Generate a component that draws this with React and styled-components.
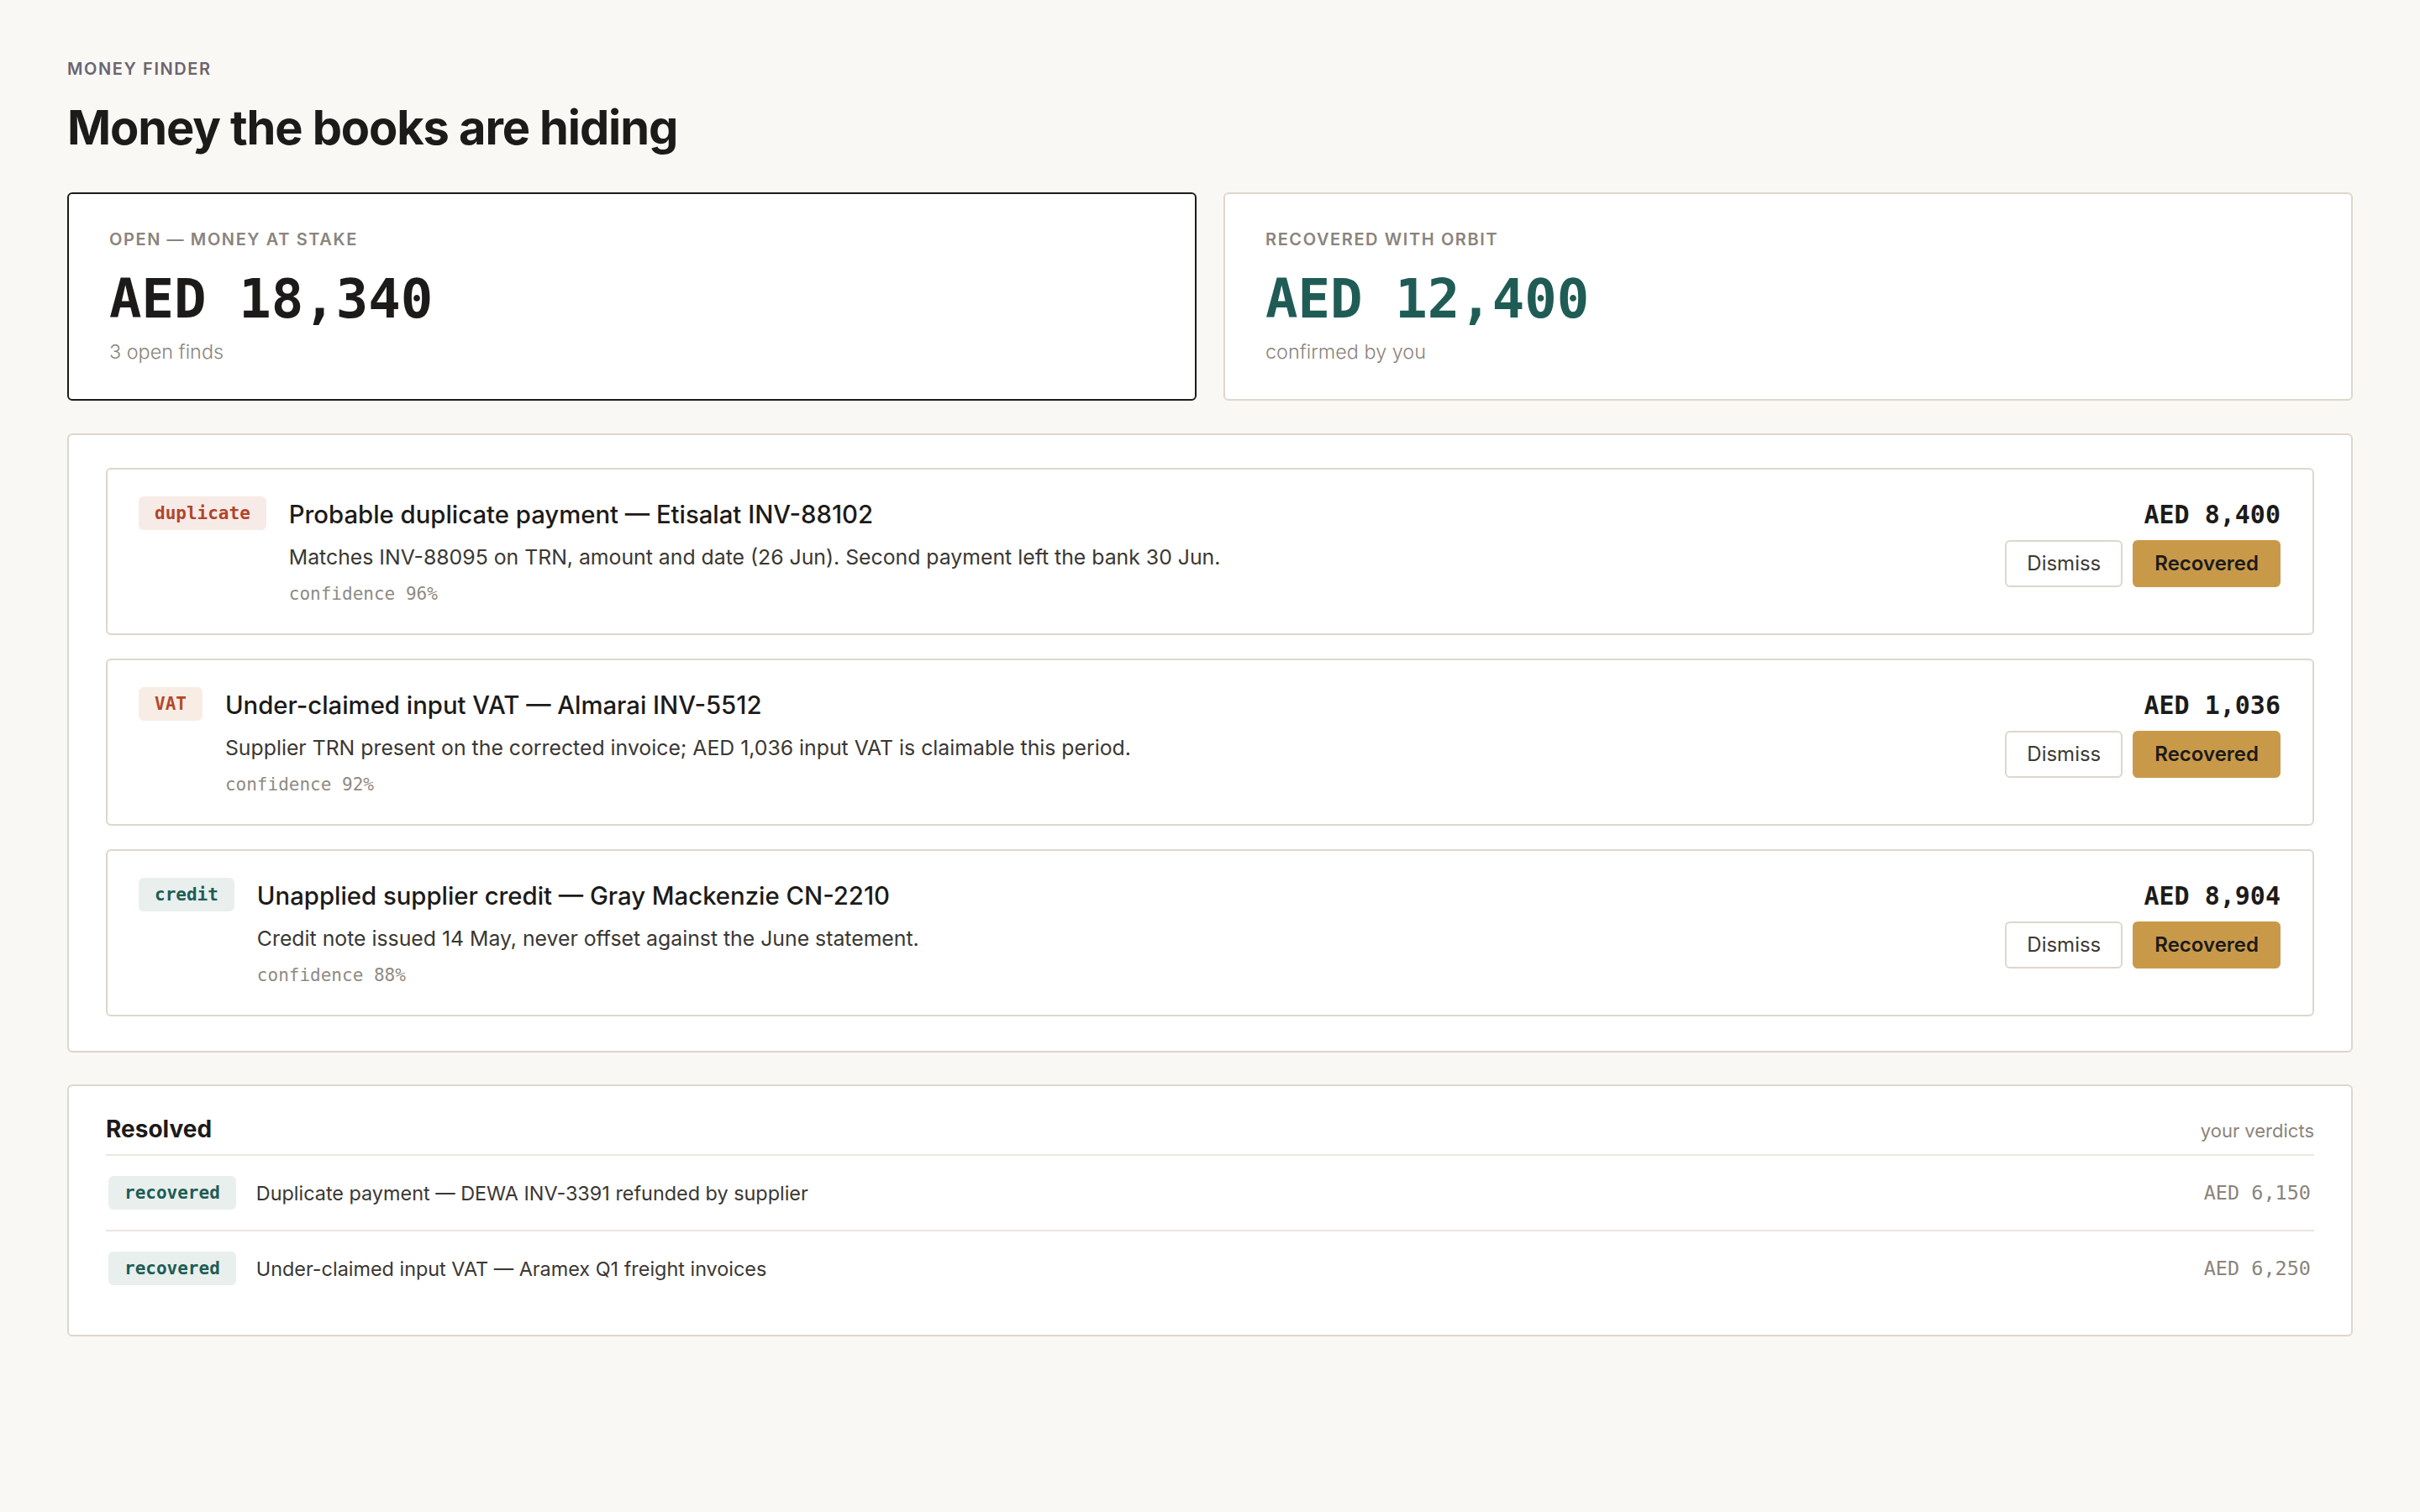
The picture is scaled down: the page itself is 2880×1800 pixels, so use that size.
import React from 'react';
import styled, { createGlobalStyle } from 'styled-components';

const GlobalStyle = createGlobalStyle`
  * {
    box-sizing: border-box;
  }
  body {
    margin: 0;
    background: #faf8f5;
    color: #1c1b19;
    font-family: Inter, 'Noto Sans', sans-serif;
  }
`;

const mono = `'DejaVu Sans Mono', 'Liberation Mono', monospace`;

const tagColors = {
  duplicate: { bg: '#f7ebe7', fg: '#b0452b' },
  vat: { bg: '#f8ede4', fg: '#b4472a' },
  credit: { bg: '#e8efed', fg: '#1f5c55' },
};

const findings = [
  {
    kind: 'duplicate',
    tag: 'duplicate',
    title: 'Probable duplicate payment — Etisalat INV-88102',
    text: 'Matches INV-88095 on TRN, amount and date (26 Jun). Second payment left the bank 30 Jun.',
    confidence: 96,
    amount: 'AED 8,400',
  },
  {
    kind: 'vat',
    tag: 'VAT',
    title: 'Under-claimed input VAT — Almarai INV-5512',
    text: 'Supplier TRN present on the corrected invoice; AED 1,036 input VAT is claimable this period.',
    confidence: 92,
    amount: 'AED 1,036',
  },
  {
    kind: 'credit',
    tag: 'credit',
    title: 'Unapplied supplier credit — Gray Mackenzie CN-2210',
    text: 'Credit note issued 14 May, never offset against the June statement.',
    confidence: 88,
    amount: 'AED 8,904',
  },
];

const resolved = [
  { label: 'Duplicate payment — DEWA INV-3391 refunded by supplier', amount: 'AED 6,150' },
  { label: 'Under-claimed input VAT — Aramex Q1 freight invoices', amount: 'AED 6,250' },
];

const App = () => {
  return (
    <Page>
      <GlobalStyle />
      <Eyebrow>Money finder</Eyebrow>
      <Heading>Money the books are hiding</Heading>

      <Stats>
        <StatCard active>
          <StatLabel>Open — money at stake</StatLabel>
          <StatValue>AED 18,340</StatValue>
          <StatNote>3 open finds</StatNote>
        </StatCard>
        <StatCard>
          <StatLabel>Recovered with Orbit</StatLabel>
          <StatValue tone='teal'>AED 12,400</StatValue>
          <StatNote>confirmed by you</StatNote>
        </StatCard>
      </Stats>

      <FindingsPanel>
        {findings.map((f) => (
          <FindingCard key={f.title}>
            <Tag kind={f.kind}>{f.tag}</Tag>
            <FindingBody>
              <FindingTitle>{f.title}</FindingTitle>
              <FindingText>{f.text}</FindingText>
              <Confidence>confidence {f.confidence}%</Confidence>
            </FindingBody>
            <FindingSide>
              <FindingAmount>{f.amount}</FindingAmount>
              <Actions>
                <Button>Dismiss</Button>
                <Button primary>Recovered</Button>
              </Actions>
            </FindingSide>
          </FindingCard>
        ))}
      </FindingsPanel>

      <ResolvedPanel>
        <ResolvedHeader>
          <ResolvedTitle>Resolved</ResolvedTitle>
          <ResolvedHint>your verdicts</ResolvedHint>
        </ResolvedHeader>
        {resolved.map((r) => (
          <ResolvedRow key={r.label}>
            <Tag kind='credit'>recovered</Tag>
            <ResolvedLabel>{r.label}</ResolvedLabel>
            <ResolvedAmount>{r.amount}</ResolvedAmount>
          </ResolvedRow>
        ))}
      </ResolvedPanel>
    </Page>
  );
};

export default App;

const Page = styled.div`
  padding: 70px 80px 80px;
`;

const Eyebrow = styled.div`
  font-size: 20px;
  line-height: 24px;
  font-weight: 600;
  letter-spacing: 0.08em;
  text-transform: uppercase;
  color: #6a6570;
`;

const Heading = styled.h1`
  margin: 26px 0 0;
  font-size: 56px;
  line-height: 64px;
  font-weight: 700;
  letter-spacing: -0.02em;
  color: #1c1b19;
`;

const Stats = styled.div`
  display: grid;
  grid-template-columns: 1fr 1fr;
  gap: 32px;
  margin-top: 45px;
`;

const StatCard = styled.div`
  background: #fff;
  border: 2px solid ${({ active }) => (active ? '#1c1b19' : '#ddd7cc')};
  border-radius: 6px;
  padding: 42px 48px 41px;
`;

const StatLabel = styled.div`
  font-size: 20px;
  line-height: 24px;
  font-weight: 600;
  letter-spacing: 0.08em;
  text-transform: uppercase;
  color: #8a847c;
`;

const StatValue = styled.div`
  margin-top: 23px;
  font-family: ${mono};
  font-size: 64px;
  line-height: 72px;
  font-weight: 700;
  color: ${({ tone }) => (tone === 'teal' ? '#1f5c55' : '#1c1b19')};
`;

const StatNote = styled.div`
  margin-top: 12px;
  font-size: 23.4px;
  line-height: 30px;
  font-weight: 300;
  color: #8a847c;
`;

const Panel = styled.section`
  background: #fff;
  border: 2px solid #ddd7cc;
  border-radius: 6px;
`;

const FindingsPanel = styled(Panel)`
  margin-top: 39px;
  padding: 39px 44px 41px;
  display: flex;
  flex-direction: column;
  gap: 28px;
`;

const FindingCard = styled.article`
  display: flex;
  align-items: flex-start;
  gap: 27px;
  border: 2px solid #ddd7cc;
  border-radius: 6px;
  padding: 32px 38px 33px 37px;
`;

const Tag = styled.span`
  flex: none;
  display: inline-flex;
  align-items: center;
  height: 40px;
  padding: 0 19px;
  border-radius: 6px;
  font-family: ${mono};
  font-size: 21px;
  font-weight: 700;
  background: ${({ kind }) => tagColors[kind].bg};
  color: ${({ kind }) => tagColors[kind].fg};
`;

const FindingBody = styled.div`
  flex: 1;
  min-width: 0;
`;

const FindingTitle = styled.div`
  font-size: 29.3px;
  line-height: 44px;
  font-weight: 500;
  color: #1c1b19;
`;

const FindingText = styled.div`
  margin-top: 10px;
  font-size: 24.8px;
  line-height: 36px;
  color: #3a3733;
`;

const Confidence = styled.div`
  margin-top: 12px;
  font-family: ${mono};
  font-size: 21px;
  line-height: 28px;
  color: #8f8a83;
`;

const FindingSide = styled.div`
  display: flex;
  flex-direction: column;
  align-items: flex-end;
  gap: 8px;
`;

const FindingAmount = styled.div`
  font-family: ${mono};
  font-size: 30px;
  line-height: 44px;
  font-weight: 700;
  color: #1c1b19;
`;

const Actions = styled.div`
  display: flex;
  gap: 12px;
`;

const Button = styled.button`
  font-family: inherit;
  font-size: 24px;
  line-height: 28px;
  padding: 12px 24px;
  border-radius: 6px;
  cursor: pointer;
  border: 2px solid ${({ primary }) => (primary ? '#c9994a' : '#ddd7cc')};
  background: ${({ primary }) => (primary ? '#c9994a' : '#fff')};
  color: ${({ primary }) => (primary ? '#1c1b19' : '#3d3a35')};
  font-weight: ${({ primary }) => (primary ? 600 : 400)};
`;

const ResolvedPanel = styled(Panel)`
  margin-top: 38px;
  padding: 35px 44px;
`;

const ResolvedHeader = styled.div`
  display: flex;
  justify-content: space-between;
  align-items: baseline;
  padding-bottom: 14px;
  border-bottom: 2px solid #ebe6df;
`;

const ResolvedTitle = styled.h2`
  margin: 0;
  font-size: 28px;
  line-height: 32px;
  font-weight: 700;
  color: #1c1b19;
`;

const ResolvedHint = styled.span`
  font-size: 22px;
  color: #8a847c;
`;

const ResolvedRow = styled.div`
  display: flex;
  align-items: center;
  gap: 24px;
  padding: 24px 4px 24px 3px;
  border-bottom: 2px solid #ebe6df;

  &:last-child {
    border-bottom: none;
  }
`;

const ResolvedLabel = styled.span`
  flex: 1;
  font-size: 23.4px;
  color: #3a3733;
`;

const ResolvedAmount = styled.span`
  font-family: ${mono};
  font-size: 23.5px;
  color: #8a847c;
`;
